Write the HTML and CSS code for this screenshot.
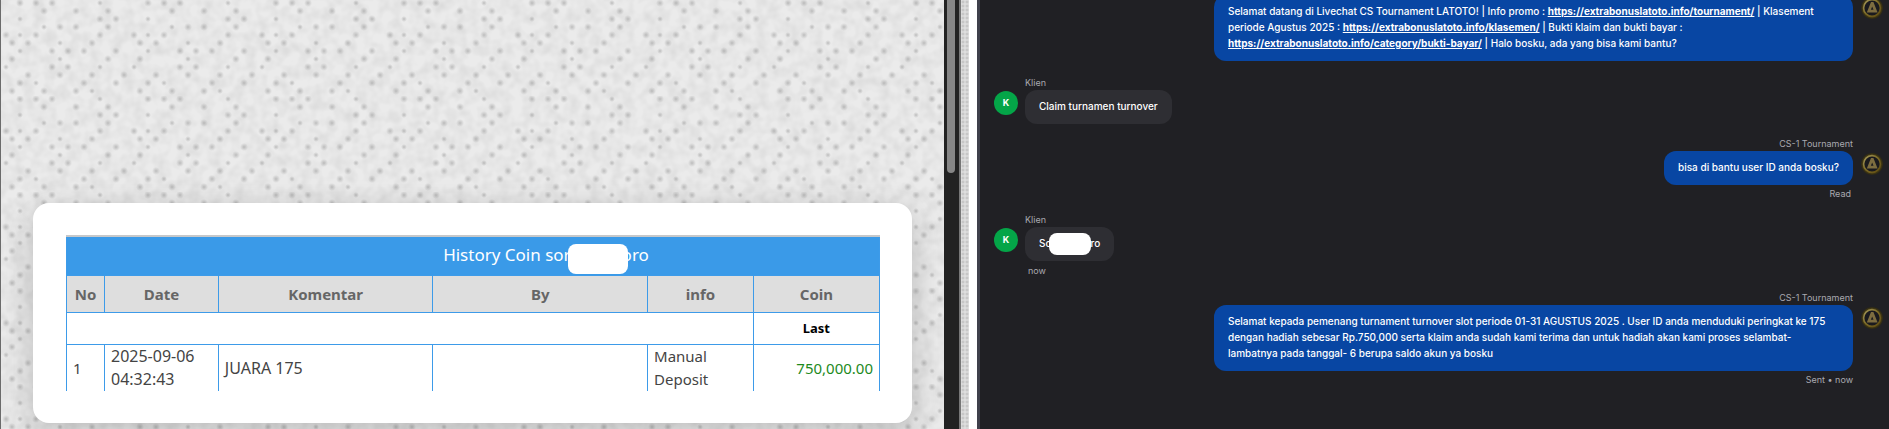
FILE: index.html
```
<!DOCTYPE html>
<html lang="id">
<head>
<meta charset="utf-8">
<title>Livechat CS Tournament</title>
<link rel="stylesheet" href="styles.css">
</head>
<body>
<svg class="defs" aria-hidden="true">
  <defs>
    <radialGradient id="gold" cx="50%" cy="50%" r="50%">
      <stop offset="0" stop-color="#15130f"/>
      <stop offset=".8" stop-color="#4a3f14"/>
      <stop offset="1" stop-color="#2a2615"/>
    </radialGradient>
    <linearGradient id="ring" x1="0" y1="0" x2="1" y2="1">
      <stop offset="0" stop-color="#a3985c"/>
      <stop offset=".5" stop-color="#7c6a26"/>
      <stop offset="1" stop-color="#5d4a10"/>
    </linearGradient>
    <symbol id="badge" viewBox="0 0 22 22">
      <circle cx="11" cy="11" r="11" fill="url(#gold)"/>
      <circle cx="11" cy="11" r="8.4" fill="#1a1a1e" stroke="url(#ring)" stroke-width="1.6"/>
      <path d="M10 5h2.400l4.200 10.500H5.800z" fill="#7d6d40"/>
      <path d="M11.200 9.500l1.300 3.200H9.800z" fill="#1a1a1e"/>
    </symbol>
  </defs>
</svg>
<main class="split">
  <section class="history">
    <svg class="fabric" aria-hidden="true">
      <defs>
        <filter id="soft" x="0" y="0" width="100%" height="100%">
          <feTurbulence type="fractalNoise" baseFrequency="0.09" numOctaves="2" seed="4"/>
          <feColorMatrix values="0 0 0 0 .55  0 0 0 0 .55  0 0 0 0 .55  .7 0 0 0 -.24"/>
        </filter>
        <radialGradient id="dot">
          <stop offset="0" stop-color="#8c8c8c" stop-opacity=".48"/>
          <stop offset="1" stop-color="#8c8c8c" stop-opacity="0"/>
        </radialGradient>
        <pattern id="weave" width="128" height="96" patternUnits="userSpaceOnUse">
          <g fill="url(#dot)">
            <circle cx="19" cy="3" r="4"/><circle cx="35" cy="3" r="4"/><circle cx="51" cy="3" r="4"/><circle cx="99" cy="3" r="3"/>
            <circle cx="43" cy="11" r="4"/><circle cx="75" cy="11" r="4"/><circle cx="107" cy="11" r="4"/>
            <circle cx="19" cy="19" r="3"/><circle cx="99" cy="19" r="4"/><circle cx="115" cy="19" r="4"/>
            <circle cx="59" cy="27" r="4"/><circle cx="75" cy="27" r="4"/><circle cx="107" cy="27" r="4"/><circle cx="43" cy="27" r="3"/>
            <circle cx="5" cy="35" r="4"/><circle cx="19" cy="35" r="3"/><circle cx="35" cy="35" r="4"/><circle cx="99" cy="35" r="4"/>
            <circle cx="11" cy="43" r="4"/><circle cx="27" cy="43" r="4"/><circle cx="59" cy="43" r="3"/><circle cx="91" cy="43" r="4"/>
            <circle cx="19" cy="51" r="3"/><circle cx="51" cy="51" r="4"/><circle cx="67" cy="51" r="4"/><circle cx="83" cy="51" r="4"/><circle cx="115" cy="51" r="4"/>
            <circle cx="11" cy="59" r="4"/><circle cx="59" cy="59" r="3"/><circle cx="107" cy="59" r="4"/>
            <circle cx="5" cy="67" r="3"/><circle cx="51" cy="67" r="4"/><circle cx="67" cy="67" r="4"/><circle cx="99" cy="67" r="3"/>
            <circle cx="27" cy="75" r="4"/><circle cx="59" cy="75" r="4"/><circle cx="91" cy="75" r="4"/><circle cx="123" cy="75" r="4"/>
            <circle cx="19" cy="83" r="4"/><circle cx="35" cy="83" r="3"/><circle cx="83" cy="83" r="4"/><circle cx="115" cy="83" r="4"/>
            <circle cx="43" cy="91" r="4"/><circle cx="75" cy="91" r="4"/><circle cx="91" cy="91" r="3"/><circle cx="11" cy="91" r="4"/>
          </g>
        </pattern>
      </defs>
      <rect width="100%" height="100%" filter="url(#soft)"/>
      <rect width="100%" height="100%" fill="url(#weave)"/>
    </svg>
    <div class="card">
      <table class="coins">
        <colgroup>
          <col class="col-no"><col class="col-date"><col class="col-note"><col class="col-by"><col class="col-info"><col class="col-coin">
        </colgroup>
        <thead>
          <tr class="title"><th colspan="6">History Coin sor<span class="mask mask-title"></span>oro</th></tr>
          <tr class="heads"><th>No</th><th>Date</th><th>Komentar</th><th>By</th><th>info</th><th>Coin</th></tr>
        </thead>
        <tbody>
          <tr class="last"><td colspan="5"></td><th>Last</th></tr>
          <tr class="entry"><td>1</td><td class="wide">2025-09-06 04:32:43</td><td class="wide">JUARA 175</td><td></td><td>Manual Deposit</td><td class="amount">750,000.00</td></tr>
        </tbody>
      </table>
    </div>
  </section>
  <div class="scrollbar"><div class="thumb"></div></div>
  <div class="seam"></div>
  <section class="chat">
    <article class="message agent opening">
      <div class="bubble">Selamat datang di Livechat CS Tournament LATOTO! | Info promo : <a href="https://extrabonuslatoto.info/tournament/">https://extrabonuslatoto.info/tournament/</a> | Klasement periode Agustus 2025 : <a href="https://extrabonuslatoto.info/klasemen/">https://extrabonuslatoto.info/klasemen/</a> | Bukti klaim dan bukti bayar : <a href="https://extrabonuslatoto.info/category/bukti-bayar/">https://extrabonuslatoto.info/category/bukti-bayar/</a> | Halo bosku, ada yang bisa kami bantu?</div>
      <svg class="avatar"><use href="#badge"/></svg>
    </article>
    <article class="message client">
      <div class="name">Klien</div>
      <div class="avatar">K</div>
      <div class="bubble">Claim turnamen turnover</div>
    </article>
    <article class="message agent">
      <div class="name">CS-1 Tournament</div>
      <div class="bubble">bisa di bantu user ID anda bosku?</div>
      <svg class="avatar"><use href="#badge"/></svg>
      <div class="status read">Read</div>
    </article>
    <article class="message client">
      <div class="name">Klien</div>
      <div class="avatar">K</div>
      <div class="bubble">So<span class="mask mask-chat"></span>ro</div>
      <div class="status">now</div>
    </article>
    <article class="message agent">
      <div class="name">CS-1 Tournament</div>
      <div class="bubble">Selamat kepada pemenang turnament turnover slot periode 01-31 AGUSTUS 2025 . User ID anda menduduki peringkat ke 175 dengan hadiah sebesar Rp.750,000 serta klaim anda sudah kami terima dan untuk hadiah akan kami proses selambat-lambatnya pada tanggal- 6 berupa saldo akun ya bosku</div>
      <svg class="avatar"><use href="#badge"/></svg>
      <div class="status">Sent • now</div>
    </article>
  </section>
</main>
</body>
</html>
```
FILE: styles.css
```
* { box-sizing: border-box; }

body {
  margin: 0;
  background: #fff;
  overflow: hidden;
}

.defs { position: absolute; width: 0; height: 0; }

.split {
  display: grid;
  grid-template-columns: minmax(0, 944fr) 17px 16px minmax(0, 912fr);
  height: 100vh;
}

/* Coin history */
.history {
  position: relative;
  display: flex;
  flex-direction: column;
  justify-content: flex-end;
  padding: 0 32px 6px;
  border-left: 1px solid #6b6b6b;
  background: #ebebeb;
  overflow: hidden;
}

.fabric {
  position: absolute;
  inset: 0;
  width: 100%;
  height: 100%;
}

.card {
  position: relative;
  padding: 32px 32px 32px 33px;
  border-radius: 16px;
  background: #fff;
  box-shadow: 0 8px 32px rgba(0, 0, 0, .2);
}

.coins {
  width: 100%;
  table-layout: fixed;
  border-collapse: collapse;
  font-family: "Noto Sans", "Open Sans", sans-serif;
  font-size: 15px;
  line-height: 23px;
  color: #444;
}

.col-no { width: 38px; }
.col-date { width: 14%; }
.col-note { width: 26.4%; }
.col-by { width: 26.4%; }
.col-info { width: 13%; }

.coins th,
.coins td {
  padding: 0 6px;
  border: 1px solid #3d9be9;
}

.coins .title th {
  height: 40px;
  padding-left: 152px;
  border-top: 2px solid #c6c8ca;
  background: #3a9ae8;
  color: #fff;
  font-size: 17px;
  font-weight: 400;
}

.coins .heads th {
  height: 37px;
  background: #dedede;
  color: #666;
  font-weight: 700;
}

.coins .last th,
.coins .last td { height: 32px; }

.coins .last th {
  color: #000;
  font-size: 13px;
}

.coins .entry td {
  height: 46px;
  border-bottom: 0;
}

.coins .entry .wide { font-size: 16px; }

.coins .amount {
  color: #1d8a1d;
  text-align: right;
}

.mask {
  position: relative;
  display: inline-block;
  vertical-align: middle;
  background: #fff;
}

.mask-title {
  width: 60px;
  height: 30px;
  margin: 0 -6px -6px -3px;
  border-radius: 8px;
}

.mask-chat {
  width: 42px;
  height: 22px;
  margin: -4px 0 -4px -3px;
  border-radius: 8px;
}

/* Divider */
.scrollbar {
  padding: 0 4px 0 3px;
  border-right: 2px solid #777;
  background: #222;
}

.thumb {
  height: 173px;
  border-radius: 0 0 5px 5px;
  background: #868686;
}

.seam {
  border-right: 8px solid #fff;
  background: radial-gradient(circle, #bababa 0, #dedede 2px) 0 0 / 4px 4px;
}

/* Chat */
.chat {
  display: flex;
  flex-direction: column;
  justify-content: flex-end;
  padding: 0 6px 42px 14px;
  border-left: 3px solid #3f404b;
  background: #202024;
  font-family: Inter, sans-serif;
  color: #fff;
  overflow: hidden;
}

.message {
  flex: none;
  display: grid;
}

.agent {
  grid-template-columns: minmax(0, 1fr) 22px;
  grid-template-areas: "name ." "bubble avatar" "status .";
  column-gap: 8px;
  justify-items: end;
  margin-top: 13px;
}

.client {
  grid-template-columns: 24px minmax(0, 1fr);
  grid-template-areas: ". name" "avatar bubble" ". status";
  column-gap: 7px;
  justify-items: start;
  margin-top: 12px;
}

.opening { margin-bottom: 3px; }

.name,
.status {
  font-size: 9px;
  line-height: 14px;
  color: #a9a9b0;
}

.name { grid-area: name; }

.status { grid-area: status; }

.agent .status { margin-top: 2px; }
.client .status { margin: 3px 0 0 3px; }
.agent .read { margin-right: 2px; }

.bubble {
  grid-area: bubble;
  max-width: 639px;
  padding: 8px 14px 10px;
  border-radius: 12px;
  font-size: 10px;
  font-weight: 500;
  line-height: 16px;
}

.agent .bubble { background: #0846a3; }

.client .bubble { background: #2e2e33; }

.bubble a {
  color: inherit;
  font-weight: 700;
}

.avatar {
  grid-area: avatar;
  width: 22px;
  height: 22px;
  margin-top: 2px;
}

.client .avatar {
  width: 24px;
  height: 24px;
  margin-top: 1px;
  border-radius: 50%;
  background: #04a548;
  font-size: 9px;
  font-weight: 700;
  line-height: 24px;
  text-align: center;
}
```
